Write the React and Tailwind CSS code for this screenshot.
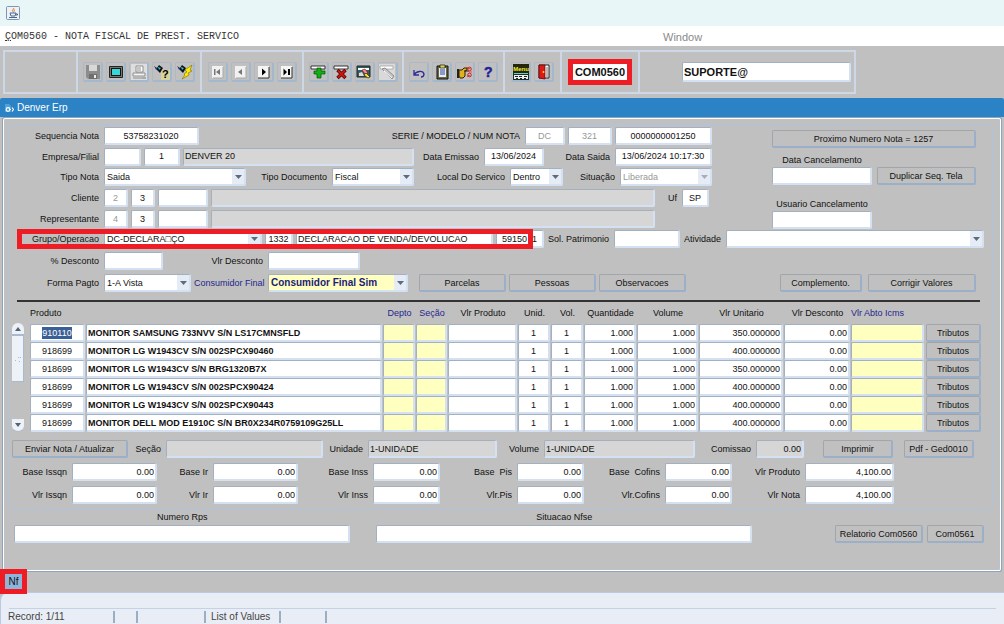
import { useState } from 'react';
import clsx from 'clsx';

const PRODUCTS = [
  { code: '910110', name: 'MONITOR SAMSUNG 733NVV S/N LS17CMNSFLD', price: '350.000000' },
  { code: '918699', name: 'MONITOR LG W1943CV S/N 002SPCX90460', price: '400.000000' },
  { code: '918699', name: 'MONITOR LG W1943CV S/N BRG1320B7X', price: '350.000000' },
  { code: '918699', name: 'MONITOR LG W1943CV S/N 002SPCX90424', price: '400.000000' },
  { code: '918699', name: 'MONITOR LG W1943CV S/N 002SPCX90443', price: '400.000000' },
  { code: '918699', name: 'MONITOR DELL MOD E1910C S/N BR0X234R0759109G25LL', price: '400.000000' },
];

const COLUMNS = [
  { label: 'Produto', col: 'w-[56px]', th: 'text-left' },
  { label: '', col: '', th: '' },
  { label: 'Depto', col: 'w-[33px]', th: 'text-center text-[#26268c]' },
  { label: 'Seção', col: 'w-[32px]', th: 'text-center text-[#26268c]' },
  { label: 'Vlr Produto', col: 'w-[70px]', th: 'text-center' },
  { label: 'Unid.', col: 'w-[33px]', th: 'text-center' },
  { label: 'Vol.', col: 'w-[33px]', th: 'text-center' },
  { label: 'Quantidade', col: 'w-[53px]', th: 'text-center' },
  { label: 'Volume', col: 'w-[62px]', th: 'text-center' },
  { label: 'Vlr Unitario', col: 'w-[85px]', th: 'text-center' },
  { label: 'Vlr Desconto', col: 'w-[67px]', th: 'text-center' },
  { label: 'Vlr Abto Icms', col: 'w-[75px]', th: 'text-left text-[#26268c]' },
  { label: '', col: 'w-[55px]', th: '' },
];

const TOTALS = [
  [
    { id: 'base-issqn', label: 'Base Issqn', lw: 'w-[60px]', w: 'w-[85px]', value: '0.00' },
    { id: 'base-ir', label: 'Base Ir', lw: 'w-[50px]', w: 'w-[85px]', value: '0.00' },
    { id: 'base-inss', label: 'Base Inss', lw: 'w-[69px]', w: 'w-[67px]', value: '0.00' },
    { id: 'base-pis', label: 'Base  Pis', lw: 'w-[71px]', w: 'w-[67px]', value: '0.00' },
    { id: 'base-cofins', label: 'Base  Cofins', lw: 'w-[75px]', w: 'w-[67px]', value: '0.00' },
    { id: 'total-produto', label: 'Vlr Produto', lw: 'w-[67px]', w: 'w-[89px]', value: '4,100.00' },
  ],
  [
    { id: 'vlr-issqn', label: 'Vlr Issqn', lw: 'w-[60px]', w: 'w-[85px]', value: '0.00' },
    { id: 'vlr-ir', label: 'Vlr Ir', lw: 'w-[50px]', w: 'w-[85px]', value: '0.00' },
    { id: 'vlr-inss', label: 'Vlr Inss', lw: 'w-[69px]', w: 'w-[67px]', value: '0.00' },
    { id: 'vlr-pis', label: 'Vlr.Pis', lw: 'w-[71px]', w: 'w-[67px]', value: '0.00' },
    { id: 'vlr-cofins', label: 'Vlr.Cofins', lw: 'w-[75px]', w: 'w-[67px]', value: '0.00' },
    { id: 'vlr-nota', label: 'Vlr Nota', lw: 'w-[67px]', w: 'w-[89px]', value: '4,100.00' },
  ],
];

const BOX =
  'h-[18px] min-w-0 rounded-[2px] border-t border-l border-r-2 border-b-2 border-t-[#a3b0bf] border-l-[#a3b0bf] border-r-[#d3e1f2] border-b-[#d3e1f2]';

function Label({ htmlFor, className = '', children }) {
  return (
    <label htmlFor={htmlFor} className={clsx('shrink-0 whitespace-pre pr-0.5 text-right', className)}>
      {children}
    </label>
  );
}

function Field({ className = '', tone = 'bg-white', ...props }) {
  return <input type="text" className={clsx(BOX, tone, 'px-px outline-none', className)} {...props} />;
}

function Select({ className = '', tone = 'bg-white', muted = false, value, ...props }) {
  return (
    <span className={clsx(BOX, tone, 'flex', className)}>
      <select
        className={clsx('min-w-0 flex-1 appearance-none pl-0.5 outline-none', muted && 'text-[#989898]')}
        defaultValue={value}
        {...props}
      >
        <option value={value}>{value}</option>
      </select>
      <span className="pointer-events-none flex w-3 shrink-0 items-center justify-center bg-[#e6ecf5]">
        <svg width="7" height="4" viewBox="0 0 7 4">
          <path d="M0 0h7L3.5 4z" fill={muted ? '#a9aeb6' : '#5f6b7c'} />
        </svg>
      </span>
    </span>
  );
}

function Button({ className = '', children, ...props }) {
  return (
    <button
      type="button"
      className={clsx(
        'h-[18px] shrink-0 whitespace-nowrap rounded-[2px] border-t border-l border-r-2 border-b-2 border-t-[#a2a6ab] border-l-[#a2a6ab] border-r-[#9bb0c8] border-b-[#9bb0c8] bg-[#c0c0c0] text-center',
        className
      )}
      {...props}
    >
      {children}
    </button>
  );
}

/* toolbar drawings, all on a 16x16 grid */
const ICONS = {
  save: (
    <>
      <path d="M1 1h14v14H3l-2-2z" fill="#8c8c8c" />
      <path d="M4 1h8v6H4z" fill="#d8d8d8" />
      <path d="M4 10h8v5H4z" fill="#6f6f6f" />
      <path d="M9 11h2v3H9z" fill="#eee" />
    </>
  ),
  screen: (
    <>
      <rect x="1" y="2" width="14" height="12" rx="1" fill="#222" />
      <rect x="2" y="3" width="12" height="10" fill="#767676" />
      <rect x="3" y="4" width="10" height="8" fill="#111" />
      <rect x="4" y="5" width="8" height="6" fill="#39d6d6" />
    </>
  ),
  print: (
    <>
      <path d="M0 0h16v16H0z" fill="#dedede" />
      <path d="M5 2h7v6H5z" fill="#fff" stroke="#8c8c8c" />
      <path d="M6 4h4M6 6h4M2 9h12v3H2zM2 14h9" stroke="#8c8c8c" fill="#f4f4f4" />
      <path d="M11 13h4v2h-4z" fill="#aaa" />
    </>
  ),
  query: (
    <>
      <path d="M7 6h9v10H7z" fill="#d8d49a" />
      <path d="M0 2l3 2 2-3 4 3-3 5-2-2-2-2z" fill="#111" />
      <path d="M4 3l3 1-2 2z" fill="#22c9f2" />
      <path d="M1 3l2 2-1 1z" fill="#2b47d9" />
      <text x="8" y="14" fontSize="11" fontWeight="bold" fill="#000">?</text>
    </>
  ),
  execute: (
    <>
      <path d="M0 2l3 2 2-3 4 3-3 5-2-2-2-2z" fill="#111" />
      <path d="M4 3l3 1-2 2z" fill="#22c9f2" />
      <path d="M1 3l2 2-1 1z" fill="#2b47d9" />
      <path d="M15 1L8 6l2 2-3 2 1 1-3 4 7-4-1-2 4-2-2-1z" fill="#ffee00" stroke="#8a7a00" strokeWidth=".7" />
    </>
  ),
  first: (
    <>
      <path d="M3 2h11v12H3z" fill="#f1f1f1" />
      <path d="M14 3v11H4" fill="none" stroke="#a8a8a8" />
      <path d="M5 5h1.500v6H5zM11 5v6L7 8z" fill="#777" />
    </>
  ),
  prev: (
    <>
      <path d="M3 2h11v12H3z" fill="#f1f1f1" />
      <path d="M14 3v11H4" fill="none" stroke="#a8a8a8" />
      <path d="M10 5v6L6 8z" fill="#777" />
    </>
  ),
  next: (
    <>
      <path d="M3 2h11v12H3z" fill="#f5f5f5" />
      <path d="M14 3v11H3" fill="none" stroke="#333" />
      <path d="M7 4.500v7L11 8z" fill="#000" />
    </>
  ),
  last: (
    <>
      <path d="M3 2h11v12H3z" fill="#f5f5f5" />
      <path d="M14 3v11H3" fill="none" stroke="#333" />
      <path d="M5.500 4.500v7L9 8zM10 5h2v6h-2z" fill="#000" />
    </>
  ),
  insert: (
    <>
      <path d="M1 2h14v3H1z" fill="#fff" stroke="#333" />
      <path d="M7 4h4v3h4v3h-4v4H7v-4H4V7h3z" fill="#12b012" stroke="#064f06" strokeWidth=".7" />
    </>
  ),
  remove: (
    <>
      <path d="M1 2h14v3H1z" fill="#fff" stroke="#333" />
      <path d="M4.500 6l8 8M12.500 6l-8 8" stroke="#4a0707" strokeWidth="3.400" />
      <path d="M5 6.500l7 7M12 6.500l-7 7" stroke="#d01414" strokeWidth="2" />
    </>
  ),
  clear: (
    <>
      <path d="M1 2h13v11H1z" fill="#315f5f" stroke="#222" />
      <path d="M2 4h11v2H2z" fill="#fff" />
      <path d="M6 6l3-1 3 4-3 1z" fill="#f08a9c" stroke="#7a1111" strokeWidth=".6" />
      <path d="M10 9l4 4-2 1-4-3z" fill="#ffe21c" stroke="#222" strokeWidth=".6" />
      <path d="M3 9l3-1 2 4H3z" fill="#ddd" />
    </>
  ),
  erase: (
    <>
      <path d="M0 0h16v16H0z" fill="#d9d9d9" />
      <path d="M1 2h13v3H1z" fill="#fff" stroke="#999" strokeWidth=".7" />
      <path d="M3 5l3-1 9 8-2 3z" fill="#c7c7c7" stroke="#8e8e8e" />
      <path d="M5 7l8 7" stroke="#fff" />
    </>
  ),
  undo: (
    <path d="M3 6v5h5M3 11c2-4 9-5 10-1 0 2-1 3-3 3" fill="none" stroke="#2c2c9c" strokeWidth="1.300" />
  ),
  paste: (
    <>
      <path d="M3 2h11v13H3z" fill="#6a6a42" stroke="#111" />
      <path d="M5 4h7v9H5z" fill="#e9edf8" />
      <path d="M6 1h5v3H6z" fill="#e3d84b" stroke="#111" strokeWidth=".7" />
      <path d="M6 6h5M6 8h5M6 10h5" stroke="#33459b" />
    </>
  ),
  point: (
    <>
      <path d="M2 6h3l2-2h3v2l-2 1v5l-2 2H3L2 12z" fill="#e0b21d" stroke="#2b2100" />
      <path d="M0 5h2v9H0z" fill="#222" />
      <path d="M7 7h5" stroke="#2b2100" />
      <path d="M10 3l2 2 2-2M10 13l2-2 2 2M15 8h-3" fill="none" stroke="#e05050" />
      <circle cx="12.500" cy="5" r="1.800" fill="none" stroke="#d82020" />
      <circle cx="12.500" cy="11" r="1.800" fill="none" stroke="#d82020" />
    </>
  ),
  help: (
    <text x="4" y="13" fontSize="14" fontWeight="bold" fill="#23239a" stroke="#23239a" strokeWidth=".5">?</text>
  ),
  menu: (
    <>
      <path d="M0 0h16v9H0z" fill="#26260a" />
      <text x="8" y="7" textAnchor="middle" fontSize="6" fontWeight="bold" fill="#f3ec32">Menu</text>
      <path d="M0 9h16v7H0z" fill="#16302e" />
      <path d="M1 9h14v1H1z" fill="#66cfc6" />
      <path d="M1 11h14v4H1z" fill="#eee" />
      <path d="M2 12.500h3M6 12.500h3M11 12.500h3M3 14.500h2M7 14.500h2M11 14.500h2" stroke="#222" />
    </>
  ),
  exit: (
    <>
      <path d="M3 1h10v13H3z" fill="#fff" stroke="#222" />
      <path d="M3 1h6v14l-6-1z" fill="#e01818" stroke="#5a0505" strokeWidth=".7" />
      <path d="M11 3v10" stroke="#777" />
      <circle cx="7.500" cy="8" r="1" fill="#ffe21c" />
    </>
  ),
};

const TOOL_GROUPS = [
  { width: 'w-[73px]', tools: [] },
  {
    width: 'w-[124px]',
    tools: [['save', 'Salvar'], ['screen', 'Tela'], ['print', 'Imprimir'], ['query', 'Consultar'], ['execute', 'Executar']],
  },
  { width: 'w-[102px]', tools: [['first', 'Primeiro'], ['prev', 'Anterior'], ['next', 'Proximo'], ['last', 'Ultimo']] },
  { width: 'w-[100px]', tools: [['insert', 'Inserir'], ['remove', 'Excluir'], ['clear', 'Limpar'], ['erase', 'Apagar']] },
  { width: 'w-[101px]', tools: [['undo', 'Desfazer'], ['paste', 'Colar'], ['point', 'Lista'], ['help', 'Ajuda']] },
  { width: 'w-[57px]', tools: [['menu', 'Menu'], ['exit', 'Sair']] },
];

function Toolbar() {
  return (
    <div className="mx-[3px] mt-1 flex h-11 max-w-[853px] border-2 border-[#ccd8e8]">
      {TOOL_GROUPS.map((group, i) => (
        <div
          key={i}
          className={clsx('flex shrink-0 items-center justify-center gap-[3px] border-r-2 border-[#ccd8e8]', group.width)}
        >
          {group.tools.map(([icon, title]) => (
            <button
              key={icon}
              type="button"
              aria-label={title}
              className="flex size-5 items-center justify-center rounded-[2px] border-t border-l border-r-2 border-b-2 border-t-[#b2b8bf] border-l-[#b2b8bf] border-r-[#a3b7cd] border-b-[#a3b7cd]"
            >
              <svg width="16" height="16" viewBox="0 0 16 16" className="shrink-0 overflow-visible">
                {ICONS[icon]}
              </svg>
            </button>
          ))}
        </div>
      ))}
      <div className="flex w-[78px] shrink-0 items-center justify-center border-r-2 border-[#ccd8e8]">
        <input
          type="text"
          aria-label="Programa"
          defaultValue="COM0560"
          className="h-[26px] w-16 border-[5px] border-[#ee1c25] bg-white text-center text-[11px] font-bold outline-none"
        />
      </div>
      <div className="flex flex-1 items-center pr-[3px] pl-[42px]">
        <input
          type="text"
          aria-label="Usuario"
          defaultValue="SUPORTE@"
          className="h-5 w-full min-w-0 rounded-[2px] border-t border-l border-r-2 border-b-2 border-t-[#a3b0bf] border-l-[#a3b0bf] border-r-[#d3e1f2] border-b-[#d3e1f2] bg-white pl-px text-[11px] font-bold outline-none"
        />
      </div>
    </div>
  );
}

function InvoiceHeader() {
  return (
    <>
      <div className="flex gap-[60px] pr-4">
        <div className="min-w-0 flex-1">
          <div className="flex h-5 items-center gap-[3px]">
            <Label htmlFor="seq" className="w-[92px]">Sequencia Nota</Label>
            <Field id="seq" defaultValue="53758231020" className="w-[95px] text-center" />
            <Label htmlFor="serie" className="ml-auto">SERIE / MODELO / NUM NOTA</Label>
            <Field id="serie" defaultValue="DC" className="w-[40px] text-center text-[#989898]" />
            <Field aria-label="Modelo" defaultValue="321" className="w-[44px] text-center text-[#989898]" />
            <Field aria-label="Num nota" defaultValue="0000000001250" className="w-[97px] text-center" />
          </div>
          <div className="flex h-[21px] items-center gap-[3px]">
            <Label htmlFor="empresa" className="w-[92px]">Empresa/Filial</Label>
            <Field id="empresa" className="w-[37px]" />
            <Field aria-label="Filial" defaultValue="1" className="w-[36px] text-center" />
            <Field aria-label="Nome filial" defaultValue="DENVER 20" tone="bg-[#d6d6d6]" className="flex-1" />
            <Label htmlFor="emissao" className="w-[64px]">Data Emissao</Label>
            <Field id="emissao" defaultValue="13/06/2024" className="w-[60px] text-center" />
            <Label htmlFor="saida" className="w-[65px]">Data Saida</Label>
            <Field id="saida" defaultValue="13/06/2024 10:17:30" className="w-[97px] text-center" />
          </div>
          <div className="flex h-5 items-center gap-[3px]">
            <Label htmlFor="tipo-nota" className="w-[92px]">Tipo Nota</Label>
            <Select id="tipo-nota" value="Saida" className="flex-1" />
            <Label htmlFor="tipo-doc" className="w-[80px]">Tipo Documento</Label>
            <Select id="tipo-doc" value="Fiscal" className="w-[82px]" />
            <Label htmlFor="local" className="w-[90px]">Local Do Servico</Label>
            <Select id="local" value="Dentro" className="w-[53px]" />
            <Label htmlFor="situacao" className="w-[51px]">Situação</Label>
            <Select id="situacao" value="Liberada" muted className="w-[92px]" />
          </div>
          <div className="flex h-[22px] items-center gap-[3px]">
            <Label htmlFor="cliente" className="w-[92px]">Cliente</Label>
            <Field id="cliente" defaultValue="2" className="w-6 text-center text-[#989898]" />
            <Field aria-label="Cliente filial" defaultValue="3" className="w-6 text-center" />
            <Field aria-label="Cliente codigo" className="w-[50px]" />
            <Field aria-label="Cliente nome" tone="bg-[#d6d6d6]" className="flex-1" />
            <Label htmlFor="uf" className="w-[21px]">Uf</Label>
            <Field id="uf" defaultValue="SP" className="mr-[3px] w-[27px] text-center" />
          </div>
          <div className="flex h-5 items-center gap-[3px] pr-[57px]">
            <Label htmlFor="repr" className="w-[92px]">Representante</Label>
            <Field id="repr" defaultValue="4" className="w-6 text-center text-[#989898]" />
            <Field aria-label="Representante filial" defaultValue="3" className="w-6 text-center" />
            <Field aria-label="Representante codigo" className="w-[50px]" />
            <Field aria-label="Representante nome" tone="bg-[#d6d6d6]" className="flex-1" />
          </div>
        </div>
        <div className="flex w-[204px] shrink-0 flex-col pt-1">
          <Button>Proximo Numero Nota = 1257</Button>
          <div className="mt-[5px] flex items-end justify-between">
            <div className="flex w-[100px] flex-col items-center">
              <label htmlFor="data-canc" className="h-3.5 leading-3.5">Data Cancelamento</label>
              <Field id="data-canc" className="w-full" />
            </div>
            <Button className="w-[99px]">Duplicar Seq. Tela</Button>
          </div>
          <div className="mt-3 flex w-[100px] flex-col items-center">
            <label htmlFor="user-canc" className="h-3.5 leading-3.5">Usuario Cancelamento</label>
            <Field id="user-canc" className="w-full" />
          </div>
        </div>
      </div>

      <div className="relative flex h-5 items-center gap-[3px] pr-2">
        <Label htmlFor="grupo" className="w-[92px]">Grupo/Operacao</Label>
        <Select id="grupo" value="DC-DECLARA□ÇO" className="w-[158px]" />
        <Field aria-label="Operacao" defaultValue="1332" className="w-7 text-center" />
        <Field aria-label="Descricao operacao" defaultValue="DECLARACAO DE VENDA/DEVOLUCAO" className="w-[197px]" />
        <Field aria-label="Cfop" defaultValue="59150  1" className="w-12 text-center" />
        <Label htmlFor="patrimonio" className="w-16">Sol. Patrimonio</Label>
        <Field id="patrimonio" className="w-[66px]" />
        <Label htmlFor="atividade" className="w-10">Atividade</Label>
        <Select id="atividade" value="" className="flex-1" />
        {/* highlight over the operation fields */}
        <div className="pointer-events-none absolute top-0 left-2 h-5 w-[516px] border-[5px] border-[#ee1c25]" />
      </div>

      <div className="flex h-6 items-center gap-[3px]">
        <Label htmlFor="perc-desc" className="w-[92px]">% Desconto</Label>
        <Field id="perc-desc" className="w-[59px]" />
        <Label htmlFor="vlr-desc" className="w-[99px]">Vlr Desconto</Label>
        <Field id="vlr-desc" className="w-[92px]" />
      </div>

      <div className="flex h-5 items-center gap-[3px] pr-4">
        <Label htmlFor="pagto" className="w-[92px]">Forma Pagto</Label>
        <Select id="pagto" value="1-A Vista" className="w-[87px]" />
        <Label htmlFor="consumidor" className="w-[71px] text-[#26268c]">Consumidor Final</Label>
        <Select
          id="consumidor"
          value="Consumidor Final Sim"
          tone="bg-[#ffffc0]"
          className="w-[140px] text-[10px] font-bold text-[#1c1c78]"
        />
        <Button className="ml-2 w-[87px]">Parcelas</Button>
        <Button className="w-[87px]">Pessoas</Button>
        <Button className="w-[87px]">Observacoes</Button>
        <Button className="ml-auto w-[82px]">Complemento.</Button>
        <Button className="ml-[3px] w-[108px]">Corrigir Valores</Button>
      </div>
    </>
  );
}

function ProductTable() {
  const cell = 'w-full block';
  return (
    <div className="flex pr-[11px] pl-[3px]">
      <div className="mt-[21px] mr-1.5 flex w-3 shrink-0 flex-col justify-between bg-[#c0c0c0]">
        <div className="flex flex-col">
          <button type="button" aria-label="Subir" className="flex h-[13px] items-center justify-center rounded-t-full border-b-2 border-[#a9bace] bg-[#edf2f9]">
            <svg width="6" height="4" viewBox="0 0 6 4"><path d="M0 4h6L3 0z" fill="#55616f" /></svg>
          </button>
          <div className="flex h-[46px] items-center justify-center border-r border-b border-[#a9bace] bg-[#edf2f9]">
            <svg width="8" height="8" viewBox="0 0 8 8" stroke="#a9bace"><path d="M4 3l1-1M1 6l1-1M6 3l1-1M5 7l1-1" /></svg>
          </div>
        </div>
        <button type="button" aria-label="Descer" className="flex h-[13px] items-center justify-center rounded-b-full border-b border-[#a9bace] bg-[#edf2f9]">
          <svg width="6" height="4" viewBox="0 0 6 4"><path d="M0 0h6L3 4z" fill="#55616f" /></svg>
        </button>
      </div>
      <table className="w-full table-fixed border-separate border-spacing-0">
        <thead>
          <tr className="h-[22px]">
            {COLUMNS.map((c, i) => (
              <th key={i} scope="col" className={clsx('whitespace-nowrap p-0 font-normal', c.col, c.th)}>
                {c.label}
              </th>
            ))}
          </tr>
        </thead>
        <tbody>
          {PRODUCTS.map((p, i) => (
            <tr key={i}>
              <td className="p-0 pr-px">
                {i === 0 ? (
                  <div className={clsx(BOX, 'flex items-center justify-center bg-white')}>
                    <span className="bg-[#3a5f96] text-white">{p.code}</span>
                  </div>
                ) : (
                  <Field aria-label="Produto" defaultValue={p.code} className={clsx(cell, 'text-center')} />
                )}
              </td>
              <td className="p-0 pr-px"><Field aria-label="Descricao" defaultValue={p.name} className={clsx(cell, 'font-bold')} /></td>
              <td className="p-0 pr-px"><Field aria-label="Depto" tone="bg-[#ffffc0]" className={cell} /></td>
              <td className="p-0 pr-px"><Field aria-label="Seção" tone="bg-[#ffffc0]" className={cell} /></td>
              <td className="p-0 pr-px"><Field aria-label="Vlr Produto" className={cell} /></td>
              <td className="p-0 pr-px"><Field aria-label="Unid." defaultValue="1" className={clsx(cell, 'text-center')} /></td>
              <td className="p-0 pr-px"><Field aria-label="Vol." defaultValue="1" className={clsx(cell, 'text-center')} /></td>
              <td className="p-0 pr-px"><Field aria-label="Quantidade" defaultValue="1.000" className={clsx(cell, 'text-right')} /></td>
              <td className="p-0 pr-px"><Field aria-label="Volume" defaultValue="1.000" className={clsx(cell, 'text-right')} /></td>
              <td className="p-0 pr-px"><Field aria-label="Vlr Unitario" defaultValue={p.price} className={clsx(cell, 'text-right')} /></td>
              <td className="p-0 pr-px"><Field aria-label="Vlr Desconto" defaultValue="0.00" className={clsx(cell, 'text-right')} /></td>
              <td className="p-0 pr-0.5"><Field aria-label="Vlr Abto Icms" tone="bg-[#ffffc0]" className={cell} /></td>
              <td className="p-0"><Button className={cell}>Tributos</Button></td>
            </tr>
          ))}
        </tbody>
      </table>
    </div>
  );
}

function InvoiceFooter() {
  return (
    <>
      <div className="mt-[7px] flex h-5 items-center gap-[3px] pl-[3px]">
        <Button className="w-[116px]">Enviar Nota / Atualizar</Button>
        <Label htmlFor="secao" className="w-[32px]">Seção</Label>
        <Field id="secao" tone="bg-[#d6d6d6]" className="w-[157px]" />
        <Label htmlFor="unidade" className="w-[39px]">Unidade</Label>
        <Field id="unidade" defaultValue="1-UNIDADE" tone="bg-[#d6d6d6]" className="w-[129px]" />
        <Label htmlFor="volume" className="w-[41px]">Volume</Label>
        <Field id="volume" defaultValue="1-UNIDADE" tone="bg-[#d6d6d6]" className="w-[151px]" />
        <Label htmlFor="comissao" className="w-[55px]">Comissao</Label>
        <Field id="comissao" defaultValue="0.00" tone="bg-[#d6d6d6]" className="w-12 text-right" />
        <Button className="ml-4 w-[70px]">Imprimir</Button>
        <Button className="ml-2 w-[70px]">Pdf - Ged0010</Button>
      </div>
      {TOTALS.map((row, i) => (
        <div key={i} className="mt-[3px] flex h-5 items-center gap-[3px]">
          {row.map(f => (
            <div key={f.id} className="flex items-center gap-[3px]">
              <Label htmlFor={f.id} className={f.lw}>{f.label}</Label>
              <Field id={f.id} defaultValue={f.value} className={clsx(f.w, 'text-right')} />
            </div>
          ))}
        </div>
      ))}
    </>
  );
}

export default function App() {
  const [tab, setTab] = useState('Nf');

  return (
    <div className="flex min-h-screen flex-col bg-[#c0c0c0] font-['Liberation_Sans',Arial,sans-serif] text-[9px] leading-3 text-[#111]">
      <header>
        <div className="flex h-[26px] items-center bg-[#e9f6f8] pl-1.5">
          <svg width="14" height="14" viewBox="0 0 14 14">
            <rect x=".5" y=".5" width="13" height="13" rx="1" fill="#eef1f5" stroke="#8195ad" />
            <path d="M7.500 2c1 1-2 2-1 3.500M9 3.500C7.500 4.500 8.500 5 7.500 6.500" stroke="#e5702a" fill="none" />
            <path d="M4 7h6l-1 3H5zM3 11.500h8M10 8h1.500v1H10" stroke="#466b93" fill="none" />
          </svg>
        </div>
        <nav className="flex h-5 items-center bg-white pt-px text-[#555]">
          <a href="#form" className="w-[663px] pl-[5px] font-['Liberation_Mono',monospace] text-[10px] text-[#333]">
            <span className="underline">Ç</span>OM0560 - NOTA FISCAL DE PREST. SERVICO
          </a>
          <a href="#window" className="text-[11px] text-[#8a8a8a]">Window</a>
        </nav>
      </header>

      <Toolbar />

      <div className="mt-1 flex h-[19px] items-center gap-[3px] rounded-t-[2px] bg-[#2b83c5] pl-1 text-[10px] text-white">
        <svg width="10" height="10" viewBox="0 0 10 10">
          <path d="M1 1h4l2 2v6H1z" fill="#4fa3da" />
          <circle cx="4" cy="6.500" r="1.800" fill="none" stroke="#fff" strokeWidth="1.200" />
          <path d="M6 6.500h1M8 4.500l1.500 2L8 8.500" fill="none" stroke="#fff" strokeWidth="1.200" />
        </svg>
        Denver Erp
      </div>

      <main id="form" className="mx-0.5 rounded-[2px] border border-[#8ba4c0]">
        <div className="rounded-[2px] border border-white px-1 pt-1.5 pb-[27px]">
          <section className="mr-[3px] rounded-[3px] border border-[#b1c3dc] pb-[3px]">
            <InvoiceHeader />
            <hr className="mt-[7px] mr-3 ml-2 border-t-2 border-[#333]" />
            <ProductTable />
            <InvoiceFooter />
          </section>

          <div className="mt-0.5 flex items-end pr-3 pl-1.5">
            <div className="flex flex-[336] flex-col">
              <label htmlFor="rps" className="h-3.5 text-center">Numero Rps</label>
              <Field id="rps" className="w-full" />
            </div>
            <div className="ml-[26px] flex flex-[375] flex-col">
              <label htmlFor="nfse" className="h-3.5 text-center">Situacao Nfse</label>
              <Field id="nfse" className="w-full" />
            </div>
            <Button className="ml-[83px] w-[88px]">Relatorio Com0560</Button>
            <Button className="ml-1 w-[57px]">Com0561</Button>
          </div>
        </div>
      </main>

      <div className="z-10 -mt-[3px] flex">
        <button
          type="button"
          onClick={() => setTab('Nf')}
          className={clsx('h-[25px] w-[27px] border-[5px] border-[#ee1c25] text-[10px]', tab === 'Nf' && 'bg-[#8fb5da]')}
        >
          Nf
        </button>
      </div>

      <footer className="-mt-0.5 flex flex-1 flex-col rounded-tl-lg border-t border-b border-l border-[#b9cbe2] bg-[#e9eef6] text-[10px] text-[#444]">
        <div className="mx-2 h-4 border-b border-[#c3d2e6]" />
        <div className="flex h-4 items-center pl-[7px]">
          <span className="w-[107px] border-r-2 border-[#9aaec6]">Record: 1/11</span>
          <span className="h-3 w-[23px] border-r-2 border-[#9aaec6]" />
          <span className="h-3 w-[68px] border-r-2 border-[#9aaec6]" />
          <span className="w-[75px] border-r-2 border-[#9aaec6] pl-[5px]">List of Values</span>
          <span className="h-3 w-[46px] border-r-2 border-[#9aaec6]" />
        </div>
      </footer>
    </div>
  );
}
